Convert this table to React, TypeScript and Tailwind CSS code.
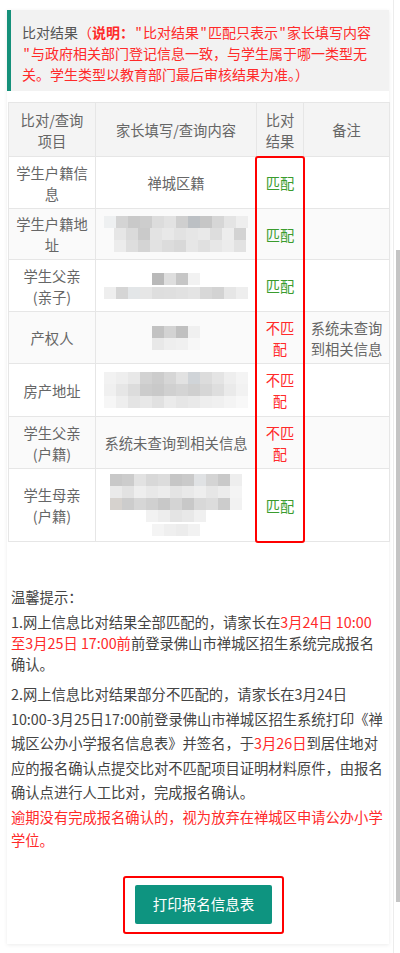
import React from "react";

type MosaicRow = { pad: string; cells: string[] };

// pixelated (blurred-out) personal data
const Mosaic = ({ rows }: { rows: MosaicRow[] }) => (
  <div className="flex flex-col items-center blur-[0.6px]">
    {rows.map((r, i) => (
      <div key={i} className={`flex ${r.pad}`}>
        {r.cells.map((c, j) => (
          <div key={j} className={`w-[12px] h-[12px] ${c}`} />
        ))}
      </div>
    ))}
  </div>
);

const addrMosaic: MosaicRow[] = [
  {
    pad: "",
    cells: ["bg-[#eef0f1]", "bg-[#d4d4d4]", "bg-[#c9c9c9]", "bg-[#cdcdcd]", "bg-[#dcdcdc]", "bg-[#e2e2e2]", "bg-[#cfcfcf]", "bg-[#bcc0c4]", "bg-[#c6c6c6]", "bg-[#d6d6d6]", "bg-[#e4e4e4]", "bg-[#eeeeee]"],
  },
  {
    pad: "pl-[8px]",
    cells: ["bg-[#e6e6e6]", "bg-[#dadada]", "bg-[#cacaca]", "bg-[#e3e3e3]", "bg-[#e8e8e8]", "bg-[#e2e2e2]", "bg-[#e6e6e6]", "bg-[#e9e9e9]", "bg-[#dddddd]", "bg-[#ededed]", "bg-[#d3d3d3]"],
  },
  {
    pad: "pl-[8px]",
    cells: ["bg-[#ececec]", "bg-[#dedede]", "bg-[#d4d4d4]", "bg-[#e2e2e2]", "bg-[#dcdcdc]", "bg-[#d8d8d8]", "bg-[#e6e6e6]", "bg-[#e0e0e0]", "bg-[#e7e7e7]", "bg-[#ececec]", "bg-[#e2e2e2]"],
  },
];

const fatherMosaic: MosaicRow[] = [
  { pad: "", cells: ["bg-[#b9b9b9]", "bg-[#dedede]", "bg-[#c6c6c6]", "bg-[#f2f2f2]"] },
  {
    pad: "pt-[2px]",
    cells: ["bg-[#eeeeee]", "bg-[#d5d5d5]", "bg-[#e3e6e8]", "bg-[#e6e6e6]", "bg-[#dedede]", "bg-[#dfdfdf]", "bg-[#e1e1e1]", "bg-[#e4e4e4]", "bg-[#d8d8d8]", "bg-[#d3d3d3]", "bg-[#e6e6e6]", "bg-[#eeeeee]"],
  },
];

const ownerMosaic: MosaicRow[] = [
  { pad: "", cells: ["bg-[#c2c2c2]", "bg-[#d3d3d3]", "bg-[#c0c0c0]", "bg-[#f0f0f0]"] },
  { pad: "", cells: ["bg-[#e8e8e8]", "bg-[#eeeeee]", "bg-[#f0f0f0]", "bg-[#f7f7f7]"] },
];

const houseMosaic: MosaicRow[] = [
  {
    pad: "",
    cells: ["bg-[#f2f2f2]", "bg-[#eeeeee]", "bg-[#e8e8e8]", "bg-[#d2d2d2]", "bg-[#cccccc]", "bg-[#d6d6d6]", "bg-[#e2e2e2]", "bg-[#d0d4d8]", "bg-[#dcdcdc]", "bg-[#e4e4e4]", "bg-[#eeeeee]", "bg-[#f4f4f4]"],
  },
  {
    pad: "",
    cells: ["bg-[#f0f0f0]", "bg-[#e6e6e6]", "bg-[#dcdcdc]", "bg-[#cccccc]", "bg-[#c9c9c9]", "bg-[#d0d0d0]", "bg-[#d4d4d4]", "bg-[#cfcfcf]", "bg-[#d6d6d6]", "bg-[#dedede]", "bg-[#eaeaea]", "bg-[#f2f2f2]"],
  },
  {
    pad: "",
    cells: ["bg-[#f6f6f6]", "bg-[#eeeeee]", "bg-[#e4e4e4]", "bg-[#e8e8e8]", "bg-[#e1e1e1]", "bg-[#ebebeb]", "bg-[#e6e6e6]", "bg-[#e9e9e9]", "bg-[#eeeeee]", "bg-[#f0f0f0]", "bg-[#f4f4f4]", "bg-[#f8f8f8]"],
  },
];

const motherMosaic: MosaicRow[] = [
  {
    pad: "",
    cells: ["bg-[#c8c8c8]", "bg-[#cccccc]", "bg-[#e2e2e2]", "bg-[#d8d8d8]", "bg-[#dcdcdc]", "bg-[#c6c6c6]", "bg-[#cacaca]", "bg-[#e0e2e4]", "bg-[#d4d4d4]", "bg-[#c9c9c9]", "bg-[#eeeeee]"],
  },
  {
    pad: "",
    cells: ["bg-[#eaeaea]", "bg-[#e2e2e2]", "bg-[#eeeeee]", "bg-[#e8e8e8]", "bg-[#ececec]", "bg-[#e4e4e4]", "bg-[#e9e9e9]", "bg-[#eeeeee]", "bg-[#e6e6e6]", "bg-[#ececec]", "bg-[#f4f4f4]"],
  },
  {
    pad: "",
    cells: ["bg-[#d6d2ce]", "bg-[#cccccc]", "bg-[#d6d6d6]", "bg-[#d0d0d0]", "bg-[#c8c8c8]", "bg-[#d4d4d4]", "bg-[#c8c8c8]", "bg-[#d8d8d8]", "bg-[#dcdcdc]", "bg-[#cccccc]", "bg-[#f2f2f2]"],
  },
  {
    pad: "pb-[2px]",
    cells: ["bg-[#f2f2f2]", "bg-[#ededed]", "bg-[#e4e4e4]", "bg-[#e8e8e8]", "bg-[#f0f0f0]"],
  },
  {
    pad: "",
    cells: ["bg-[#f4f4f4]", "bg-[#efefef]", "bg-[#ececec]", "bg-[#f2f2f2]"],
  },
];

type Row = {
  h: string;
  name: string[];
  content: React.ReactNode;
  match: boolean;
  note?: string[];
  stripe?: boolean;
};

const rows: Row[] = [
  { h: "h-[52px]", name: ["学生户籍信", "息"], content: "禅城区籍", match: true },
  { h: "h-[51px]", name: ["学生户籍地", "址"], content: <Mosaic rows={addrMosaic} />, match: true, stripe: true },
  { h: "h-[52px]", name: ["学生父亲", "(亲子)"], content: <Mosaic rows={fatherMosaic} />, match: true },
  {
    h: "h-[52px]",
    name: ["产权人"],
    content: <Mosaic rows={ownerMosaic} />,
    match: false,
    note: ["系统未查询", "到相关信息"],
    stripe: true,
  },
  { h: "h-[53px]", name: ["房产地址"], content: <Mosaic rows={houseMosaic} />, match: false },
  { h: "h-[52px]", name: ["学生父亲", "(户籍)"], content: "系统未查询到相关信息", match: false, stripe: true },
  { h: "h-[73px]", name: ["学生母亲", "(户籍)"], content: <Mosaic rows={motherMosaic} />, match: true },
];

const lines = (parts: string[]) =>
  parts.map((p, i) => (
    <React.Fragment key={i}>
      {i > 0 && <br />}
      {p}
    </React.Fragment>
  ));

const cell = "border border-[#e6e6e6] text-center align-middle px-[6px] py-0";

// narrow quote mark as seen in the original font
const Q = () => <span className="inline-block w-[9px] text-center">"</span>;

export default function App() {
  return (
    <div className="flex min-h-[953px] bg-white font-['Noto_Sans_CJK_SC',sans-serif] text-[14.3px]">
      <div className="w-[393px] pl-[7px] pt-[10px]">
        <div className="w-[382px] bg-white shadow-[0_1px_4px_rgba(0,0,0,0.08)] pb-[10px]">
          {/* header notice */}
          <div className="bg-[#f2f2f2] border-l-[4px] border-[#15907a] pl-[11px] pt-[12px] pb-[6px] leading-[21px] text-[14px] text-[#555] whitespace-nowrap">
            比对结果
            <span className="text-[#ff2a2a]">
              （<b>说明：</b><Q />比对结果<Q />匹配只表示<Q />家长填写内容
            </span>
            <br />
            <span className="text-[#ff2a2a]">
              <Q />与政府相关部门登记信息一致，与学生属于哪一类型无
            </span>
            <br />
            <span className="text-[#ff2a2a]">关。学生类型以教育部门最后审核结果为准。）</span>
          </div>

          {/* comparison table */}
          <div className="relative mt-[11px] pl-[1px]">
            <table className="w-[381px] border-collapse table-fixed text-[#666] leading-[21px]">
              <colgroup>
                <col className="w-[87px]" />
                <col className="w-[161px]" />
                <col className="w-[47px]" />
                <col className="w-[86px]" />
              </colgroup>
              <thead>
                <tr className="h-[54px] bg-[#f4f4f4]">
                  <th className={`${cell} font-normal`}>比对/查询<br />项目</th>
                  <th className={`${cell} font-normal`}>家长填写/查询内容</th>
                  <th className={`${cell} font-normal`}>比对<br />结果</th>
                  <th className={`${cell} font-normal`}>备注</th>
                </tr>
              </thead>
              <tbody>
                {rows.map((r, i) => (
                  <tr key={i} className={`${r.h} ${r.stripe ? "bg-[#fafafa]" : "bg-white"}`}>
                    <td className={cell}>{lines(r.name)}</td>
                    <td className={cell}>
                      <div className="flex justify-center">{r.content}</div>
                    </td>
                    <td className={cell}>
                      {r.match ? (
                        <span className="text-[#3a9c2e]">匹配</span>
                      ) : (
                        <span className="text-[#ff2a2a]">不匹<br />配</span>
                      )}
                    </td>
                    <td className={cell}>{r.note ? lines(r.note) : null}</td>
                  </tr>
                ))}
              </tbody>
            </table>
            {/* red highlight around results column */}
            <div className="absolute left-[248px] top-[54px] w-[50px] h-[387px] border-2 border-[#ff0000] rounded-[3px] pointer-events-none" />
          </div>

          {/* tips */}
          <div className="mt-[43px] px-[4px] text-[#444] whitespace-nowrap">
            <p className="leading-[24px] mb-[2px]">温馨提示：</p>
            <p className="leading-[21px]">
              1.网上信息比对结果全部匹配的，请家长在<span className="text-[#ff2a2a]">3月24日 10:00</span>
              <br />
              <span className="text-[#ff2a2a]">至3月25日 17:00前</span>前登录佛山市禅城区招生系统完成报名
              <br />
              确认。
            </p>
            <p className="leading-[24.5px] mt-[8px]">
              2.网上信息比对结果部分不匹配的，请家长在3月24日
              <br />
              10:00-3月25日17:00前登录佛山市禅城区招生系统打印《禅
              <br />
              城区公办小学报名信息表》并签名，于<span className="text-[#ff2a2a]">3月26日</span>到居住地对
              <br />
              应的报名确认点提交比对不匹配项目证明材料原件，由报名
              <br />
              确认点进行人工比对，完成报名确认。
            </p>
            <p className="leading-[23px] text-[#ff2a2a]">
              逾期没有完成报名确认的，视为放弃在禅城区申请公办小学
              <br />
              学位。
            </p>
          </div>

          <div className="mt-[25px] flex justify-center pl-[11px]">
            <div className="border-2 border-[#ff0000] rounded-[3px] px-[10px] pt-[7px] pb-[8px]">
              <button className="w-[137px] h-[39px] bg-[#0e9480] text-white text-[14.5px] rounded-[2px]">
                打印报名信息表
              </button>
            </div>
          </div>
        </div>
      </div>

      {/* scrollbar */}
      <div className="w-[7px] border-l border-[#ececec] flex justify-end">
        <div className="mt-[250px] w-[4px] h-[652px] bg-[#c4c4c4]" />
      </div>
    </div>
  );
}
